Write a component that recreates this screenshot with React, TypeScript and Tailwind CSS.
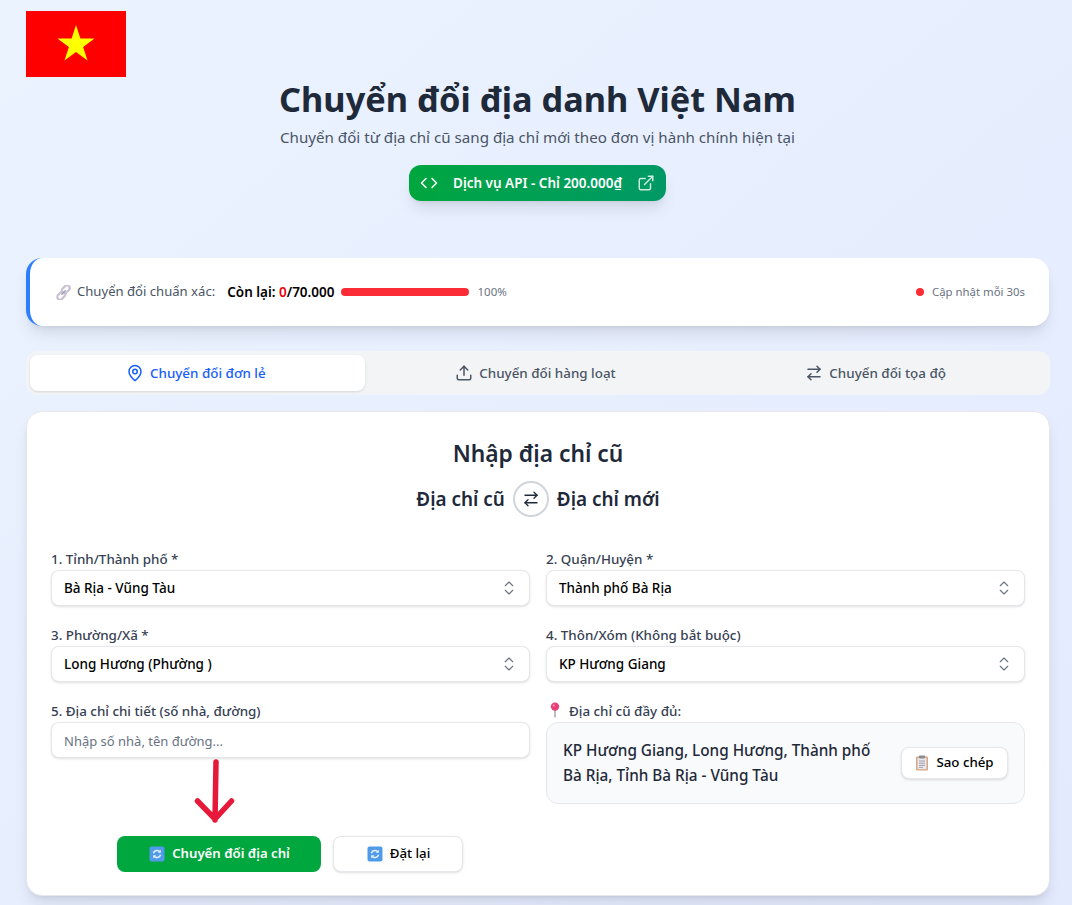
import { ArrowRightLeft, ChevronsUpDown, Code, ExternalLink, MapPin, Upload } from "lucide-react";

function Refresh({ size = 16 }: { size?: number }) {
  return (
    <svg width={size} height={size} viewBox="0 0 16 16" className="shrink-0">
      <rect x="0.5" y="0.5" width="15" height="15" rx="2" fill="#4f9bea" />
      <path d="M4.4 7.2A3.7 3.7 0 0 1 11 6" fill="none" stroke="#e8f1fb" strokeWidth="1.5" />
      <path d="M11.6 8.8A3.7 3.7 0 0 1 5 10" fill="none" stroke="#e8f1fb" strokeWidth="1.5" />
      <path d="M11.8 3.8v3h-3z" fill="#e8f1fb" />
      <path d="M4.2 12.2v-3h3z" fill="#e8f1fb" />
    </svg>
  );
}

function LinkEmoji() {
  return (
    <svg width="15" height="15" viewBox="0 0 15 15" className="shrink-0">
      <rect x="7" y="-0.2" width="5.4" height="9" rx="2.7" transform="rotate(45 9.7 4.3)" fill="none" stroke="#c9c0d3" strokeWidth="2.2" />
      <rect x="2.6" y="6.2" width="5.4" height="9" rx="2.7" transform="rotate(45 5.3 10.7)" fill="none" stroke="#c9c0d3" strokeWidth="2.2" />
      <path d="M5.8 9.2l3.4-3.4" stroke="#aea6b8" strokeWidth="1.6" strokeLinecap="round" />
    </svg>
  );
}

function Pin() {
  return (
    <svg width="14" height="16" viewBox="0 0 14 16" className="shrink-0">
      <path d="M7 8v7.5" stroke="#9ca3af" strokeWidth="1.4" />
      <circle cx="7" cy="4.6" r="4.2" fill="#e9407a" />
      <circle cx="5.7" cy="3.4" r="1" fill="#f8a3c1" />
    </svg>
  );
}

function Clipboard() {
  return (
    <svg width="14" height="16" viewBox="0 0 14 16" className="shrink-0">
      <rect x="1" y="1.5" width="12" height="14" rx="1" fill="#d6a688" />
      <rect x="2.5" y="3" width="9" height="11.2" fill="#e9e8ec" />
      <rect x="4" y="0.5" width="6" height="3" rx="0.7" fill="#8d8a94" />
      <path d="M4 6h6M4 8.2h6M4 10.4h6M4 12.4h4" stroke="#9b98a5" strokeWidth="0.9" />
    </svg>
  );
}

function Field({ label, children }: { label: string; children: React.ReactNode }) {
  return (
    <div className="flex flex-col">
      <label className="h-5 text-[13.4px] font-medium leading-[18px] text-gray-700">{label}</label>
      {children}
    </div>
  );
}

function SelectBox({ value }: { value: string }) {
  return (
    <button
      type="button"
      className="flex h-9 w-full items-center justify-between rounded-lg border border-gray-200 bg-white pl-3 pr-[11px] text-[13.5px] font-medium text-black shadow-sm"
    >
      <span>{value}</span>
      <ChevronsUpDown size={18} strokeWidth={1.5} className="text-gray-500" />
    </button>
  );
}

export default function App() {
  return (
    <div
      className="h-[905px] overflow-hidden bg-gradient-to-br from-[#ebf3ff] to-[#e3eafe] pl-[26px] pr-[23px] pt-[11px] text-gray-800"
      style={{ fontFamily: '"Noto Sans", sans-serif' }}
    >
      <svg width="100" height="66" viewBox="0 0 100 66" className="block">
        <rect width="100" height="66" fill="#ff0000" />
        <polygon points="50,14 54.4,27.6 68.6,27.6 57.1,35.9 61.5,49.5 50,41.1 38.5,49.5 42.9,35.9 31.4,27.6 45.6,27.6" fill="#ffff00" />
      </svg>

      <header className="flex flex-col items-center pt-[2px]">
        <h1 className="text-[34.3px] font-bold leading-10 text-gray-800">Chuyển đổi địa danh Việt Nam</h1>
        <p className="mt-[6px] text-[15.15px] leading-6 text-gray-600">
          Chuyển đổi từ địa chỉ cũ sang địa chỉ mới theo đơn vị hành chính hiện tại
        </p>
        <a className="mt-4 flex h-9 w-[257px] items-center justify-between rounded-xl bg-gradient-to-r from-green-600 to-emerald-600 px-[11px] text-[13.5px] font-semibold text-white shadow-lg">
          <Code size={18} />
          <span>Dịch vụ API - Chỉ 200.000₫</span>
          <ExternalLink size={18} className="opacity-80" />
        </a>
      </header>

      <section className="mt-[57px] flex h-[68px] items-center justify-between rounded-2xl border-l-4 border-blue-500 bg-white pl-[26px] pr-6 shadow-lg">
        <div className="flex items-center">
          <LinkEmoji />
          <span className="ml-[6px] text-[13.1px] text-gray-600">Chuyển đổi chuẩn xác:</span>
          <span className="ml-3 text-[13.5px] font-semibold text-black">
            Còn lại: <span className="text-red-600">0</span>/70.000
          </span>
          <div className="ml-[6px] h-2 w-32 rounded-full bg-red-500" />
          <span className="ml-[9px] text-[11.5px] text-gray-500">100%</span>
        </div>
        <div className="flex items-center gap-2">
          <span className="h-2 w-2 rounded-full bg-red-500" />
          <span className="text-[11.4px] text-gray-500">Cập nhật mỗi 30s</span>
        </div>
      </section>

      <nav className="mt-[25px] grid h-11 w-[1024px] grid-cols-3 gap-[5px] rounded-xl bg-gray-100 py-1 pl-1 pr-[6px] text-[13.4px] font-medium text-gray-600">
        <button className="flex items-center justify-center gap-[6px] rounded-lg bg-white pr-[3px] text-blue-600 shadow-sm">
          <MapPin size={18} />
          Chuyển đổi đơn lẻ
        </button>
        <button className="flex items-center justify-center gap-[6px] rounded-lg pr-[3px]">
          <Upload size={18} />
          Chuyển đổi hàng loạt
        </button>
        <button className="flex items-center justify-center gap-[6px] rounded-lg pr-[2px]">
          <ArrowRightLeft size={18} />
          Chuyển đổi tọa độ
        </button>
      </nav>

      <main className="relative mt-4 h-[485px] w-[1024px] rounded-2xl border border-gray-200 bg-white px-6 pt-[26px] shadow-lg">
        <h2 className="text-center text-[22.8px] font-semibold leading-8 text-gray-800">Nhập địa chỉ cũ</h2>
        <div className="mt-[11px] flex items-center justify-center gap-2">
          <span className="text-[18.9px] font-semibold text-gray-800">Địa chỉ cũ</span>
          <span className="flex h-9 w-9 items-center justify-center rounded-full border-2 border-gray-300 bg-white">
            <ArrowRightLeft size={18} strokeWidth={1.75} />
          </span>
          <span className="text-[18.9px] font-semibold text-gray-800">Địa chỉ mới</span>
        </div>

        <div className="mt-[33px] grid grid-cols-2 gap-x-4 gap-y-5">
          <Field label="1. Tỉnh/Thành phố *">
            <SelectBox value="Bà Rịa - Vũng Tàu" />
          </Field>
          <Field label="2. Quận/Huyện *">
            <SelectBox value="Thành phố Bà Rịa" />
          </Field>
          <Field label="3. Phường/Xã *">
            <SelectBox value="Long Hương (Phường )" />
          </Field>
          <Field label="4. Thôn/Xóm (Không bắt buộc)">
            <SelectBox value="KP Hương Giang" />
          </Field>
          <Field label="5. Địa chỉ chi tiết (số nhà, đường)">
            <input
              placeholder="Nhập số nhà, tên đường..."
              className="h-9 w-full rounded-lg border border-gray-200 bg-white px-3 pt-px text-[13px] shadow-sm outline-none placeholder:text-gray-500"
            />
          </Field>
          <div className="flex flex-col">
            <div className="flex h-5 items-start gap-[7px] text-[13.4px] font-medium leading-[18px] text-gray-700">
              <span className="ml-[2px]">
                <Pin />
              </span>
              Địa chỉ cũ đầy đủ:
            </div>
            <div className="flex h-[82px] items-center gap-4 rounded-xl border border-gray-200 bg-gray-50 pl-4 pr-4">
              <p className="flex-1 text-[15.3px] font-medium leading-[25px] text-gray-800">
                KP Hương Giang, Long Hương, Thành phố Bà Rịa, Tỉnh Bà Rịa - Vũng Tàu
              </p>
              <button className="flex h-8 w-[107px] shrink-0 items-center justify-center gap-[7px] rounded-lg border border-gray-200 bg-white text-[13.3px] font-medium text-black shadow-sm">
                <Clipboard />
                Sao chép
              </button>
            </div>
          </div>
        </div>

        <div className="mt-8 grid grid-cols-2 gap-x-4">
          <div className="flex justify-center gap-3 pr-[2px]">
            <button className="flex h-9 w-[204px] items-center justify-center gap-[7px] rounded-lg bg-green-600 pl-[2px] text-[13.2px] font-semibold text-white">
              <Refresh size={16} />
              Chuyển đổi địa chỉ
            </button>
            <button className="flex h-9 w-[130px] items-center justify-center gap-[7px] rounded-lg border border-gray-200 bg-white pl-[2px] text-[13.3px] font-medium text-black shadow-sm">
              <Refresh size={16} />
              Đặt lại
            </button>
          </div>
        </div>

        <svg width="50" height="72" viewBox="0 0 50 72" className="absolute left-[163px] top-[345px]">
          <path d="M26 5L25 63M7.5 44L25 62L41.5 44" fill="none" stroke="#e6193a" strokeWidth="5.5" strokeLinecap="round" strokeLinejoin="round" />
        </svg>
      </main>
    </div>
  );
}
